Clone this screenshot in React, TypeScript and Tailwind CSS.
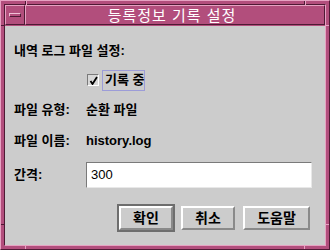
import React from 'react'

const font = { fontFamily: '"Liberation Sans", "Noto Sans CJK KR", sans-serif' }

const Btn: React.FC<{ label: string; width: string; primary?: boolean }> = ({ label, width, primary }) => (
  <div className={`${width} h-[28px] ${primary ? 'border-2 border-[#6e6e6e]' : 'p-[2px]'}`}>
    <button className="w-full h-full border-2 border-t-white border-l-white border-b-[#8a8a8a] border-r-[#8a8a8a] bg-[#cccccc] text-[14px] font-bold text-black flex items-center justify-center whitespace-nowrap">
      {label}
    </button>
  </div>
)

export default function App() {
  return (
    <div style={font} className="w-[330px] h-[250px] relative bg-[#b24e7c] border border-t-[#e6a2c2] border-l-[#e6a2c2] border-b-[#4e1a34] border-r-[#4e1a34] p-[3px]">
      {/* frame resize handle marks */}
      <span className="absolute top-0 left-[24px] w-px h-[4px] bg-[#4e1a34]" />
      <span className="absolute top-0 left-[25px] w-px h-[4px] bg-[#e6a2c2]" />
      <span className="absolute top-0 right-[24px] w-px h-[4px] bg-[#4e1a34]" />
      <span className="absolute top-0 right-[23px] w-px h-[4px] bg-[#e6a2c2]" />
      <span className="absolute bottom-0 left-[24px] w-px h-[4px] bg-[#e6a2c2]" />
      <span className="absolute bottom-0 right-[24px] w-px h-[4px] bg-[#e6a2c2]" />
      <span className="absolute left-0 top-[24px] h-px w-[4px] bg-[#4e1a34]" />
      <span className="absolute left-0 bottom-[24px] h-px w-[4px] bg-[#4e1a34]" />
      <span className="absolute right-0 top-[24px] h-px w-[4px] bg-[#e6a2c2]" />
      <span className="absolute right-0 bottom-[24px] h-px w-[4px] bg-[#e6a2c2]" />

      <div className="w-full h-full flex flex-col border border-t-[#4e1a34] border-l-[#4e1a34] border-b-[#e6a2c2] border-r-[#e6a2c2]">
        {/* title bar */}
        <div className="h-[21px] flex shrink-0">
          <div className="w-[20px] h-[20px] border border-t-[#e6a2c2] border-l-[#e6a2c2] border-b-[#4e1a34] border-r-[#4e1a34] flex items-center justify-center">
            <div className="w-[12px] h-[4px] border border-t-[#f0c0d6] border-l-[#f0c0d6] border-b-[#4e1a34] border-r-[#4e1a34]" />
          </div>
          <div className="flex-1 h-[20px] border border-t-[#e6a2c2] border-l-[#e6a2c2] border-b-[#4e1a34] border-r-[#4e1a34] flex items-center justify-center text-white text-[15px] leading-none tracking-[1px] pr-[6px]">
            등록정보 기록 설정
          </div>
        </div>

        {/* body */}
        <div className="flex-1 bg-[#cccccc] pl-[9px] pr-[13px] flex flex-col text-[13px] font-bold text-black whitespace-nowrap">
          <div className="mt-[15px] h-[20px] flex items-center">내역 로그 파일 설정:</div>

          <div className="mt-[8px] h-[22px] flex items-center pl-[73px]">
            <div className="w-[12px] h-[12px] border border-t-[#7a7a7a] border-l-[#7a7a7a] border-b-white border-r-white bg-[#d8d8d8] flex items-center justify-center">
              <svg width="9" height="9" viewBox="0 0 9 9">
                <path d="M1.5 5 L3.5 8 L8 1" stroke="black" strokeWidth="1.8" fill="none" />
              </svg>
            </div>
            <div className="ml-[3px] h-[21px] w-[43px] border border-[#9c9cd8] flex items-center pl-[2px] text-[13px]">기록 중</div>
          </div>

          <div className="mt-[9px] h-[20px] flex items-center">
            <span className="w-[72px]">파일 유형:</span>
            <span>순환 파일</span>
          </div>

          <div className="mt-[11px] h-[20px] flex items-center">
            <span className="w-[72px]">파일 이름:</span>
            <span>history.log</span>
          </div>

          <div className="mt-[11px] h-[26px] flex items-center">
            <span className="w-[72px]">간격:</span>
            <div className="flex-1 h-[26px] bg-white border border-t-[#7a7a7a] border-l-[#7a7a7a] border-b-[#e8e8e8] border-r-[#e8e8e8] flex items-center pl-[4px] text-[13px] font-normal">
              300
            </div>
          </div>

          <div className="mt-[16px] flex justify-end gap-[4px]">
            <Btn label="확인" width="w-[58px]" primary />
            <Btn label="취소" width="w-[58px]" />
            <Btn label="도움말" width="w-[71px]" />
          </div>
        </div>
      </div>
    </div>
  )
}
